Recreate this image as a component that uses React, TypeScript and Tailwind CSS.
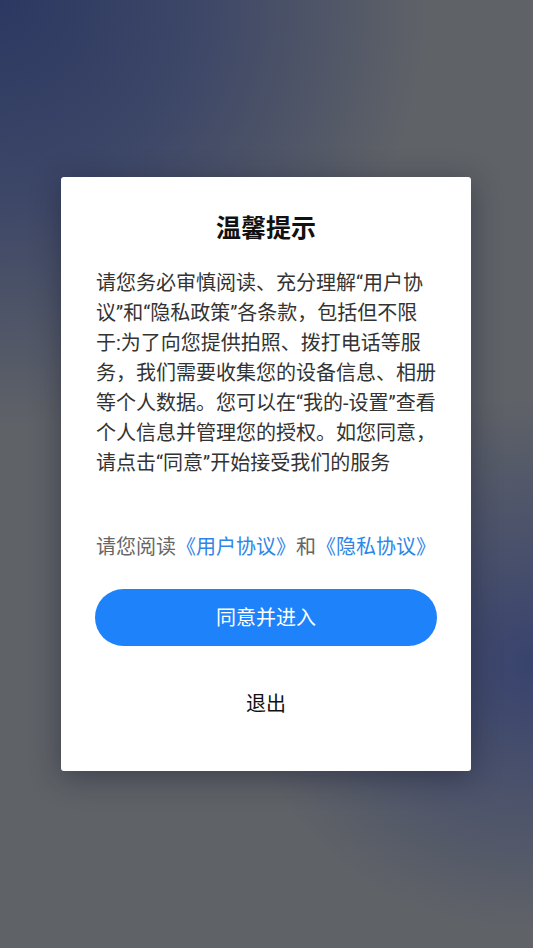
import React from 'react'

const FONT = 'font-["Roboto","Noto_Sans_CJK_SC",sans-serif]'

const bodyLines = [
  '请您务必审慎阅读、充分理解“用户协',
  '议”和“隐私政策”各条款，包括但不限',
  '于:为了向您提供拍照、拨打电话等服',
  '务，我们需要收集您的设备信息、相册',
  '等个人数据。您可以在“我的-设置”查看',
  '个人信息并管理您的授权。如您同意，',
  '请点击“同意”开始接受我们的服务',
]

export default function App() {
  return (
    <div
      className={`${FONT} w-[533px] h-[948px] flex items-center pl-[61px] bg-[#5f6267] bg-[radial-gradient(ellipse_80%_45%_at_0%_0%,#2d3862_0%,#3c4667_45%,transparent_100%),radial-gradient(ellipse_55%_28%_at_100%_70%,#38436e_0%,transparent_100%)]`}
    >
      {/* privacy dialog */}
      <div className="w-[410px] bg-white rounded-[3px] shadow-[0_6px_30px_rgba(20,25,45,0.45)] px-[34px] pt-[36px] pb-[52px] flex flex-col">
        <h1 className="text-center text-[25px] leading-[32px] font-bold text-[#111]">温馨提示</h1>

        <div className="mt-[23px] pl-[1px] text-[20px] leading-[30px] text-[#333]">
          {bodyLines.map((line) => (
            <div key={line} className="whitespace-nowrap">
              {line}
            </div>
          ))}
        </div>

        <p className="mt-[54px] pl-[1px] text-[20px] leading-[30px] text-[#666] whitespace-nowrap">
          请您阅读<span className="text-[#2f86e8]">《用户协议》</span>和<span className="text-[#2f86e8]">《隐私协议》</span>
        </p>

        <button className="mt-[27px] h-[57px] w-[342px] rounded-full bg-[#1e82fa] text-white text-[20px]">
          同意并进入
        </button>

        <button className="mt-[43px] h-[30px] text-[20px] leading-[30px] text-[#111]">退出</button>
      </div>
    </div>
  )
}
